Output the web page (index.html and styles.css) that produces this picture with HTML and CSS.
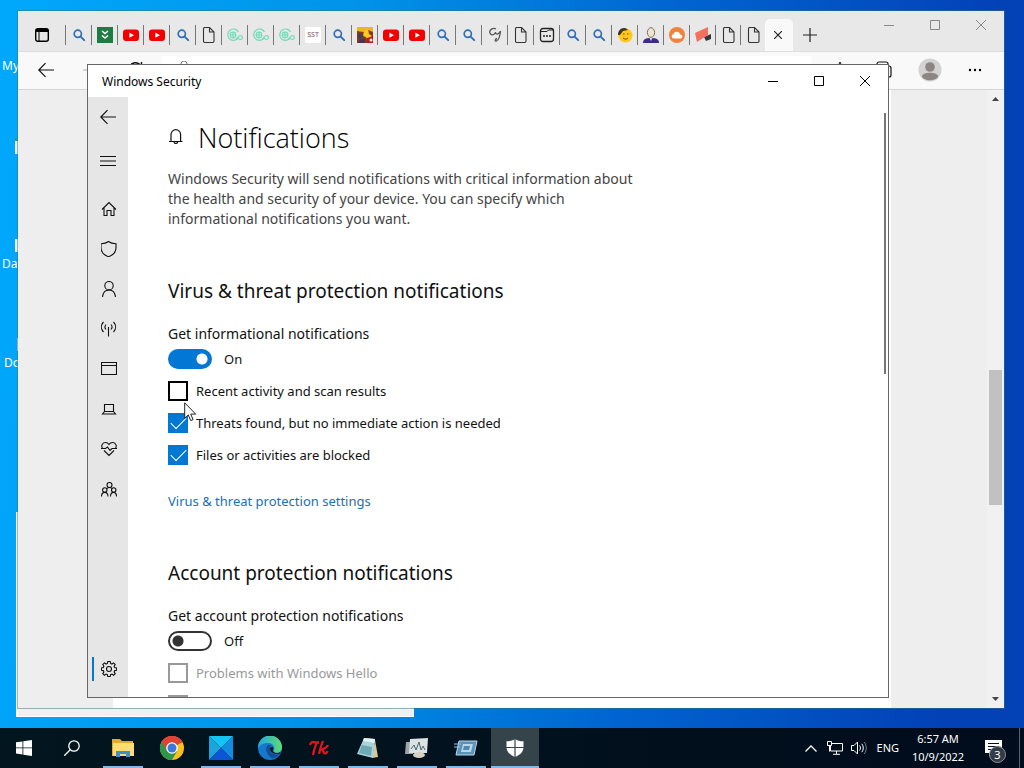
FILE: index.html
```html
<!DOCTYPE html>
<html lang="en">
<head>
    <meta charset="UTF-8">
    <meta name="viewport" content="width=device-width, initial-scale=1.0">
    <title>Windows Security</title>
    <link rel="stylesheet" href="styles.css">
</head>
<body>
    <!-- shared icons -->
    <svg class="sprite" aria-hidden="true">
        <symbol id="i-search" viewBox="0 0 16 16"><circle cx="6.8" cy="6.8" r="3.6" fill="none" stroke="#2f6fb8" stroke-width="1.7"/><path d="M9.6 9.6l3.6 3.6" stroke="#2f6fb8" stroke-width="1.9" stroke-linecap="round"/></symbol>
        <symbol id="i-youtube" viewBox="0 0 16 16"><rect x="0" y="2.500" width="16" height="11.500" rx="3" fill="#f40000"/><path d="M6.4 5.6v5.2L11 8.200z" fill="#fff"/></symbol>
        <symbol id="i-page" viewBox="0 0 16 16"><path d="M3.5.5h5l4.500 4.500v9.100a1.4 1.4 0 0 1-1.4 1.4H3.900A1.4 1.4 0 0 1 2.500 14V1.900A1.400 1.400 0 0 1 3.900.5M8.500.5V5H13" fill="none" stroke="#333" stroke-width="1.1"/></symbol>
        <symbol id="i-swirl" viewBox="0 0 16 16"><g fill="none" stroke="#74dcb9" stroke-width="1.200"><path d="M10.500 11.800A5.700 5.700 0 1 1 11.500 5"/><circle cx="6" cy="8" r="2.800"/><path d="M3 8h6M6 5v6"/><path d="M9 11.500c2 1.500 2-3 4.500-3 2.700 0 2.500 4 0 4-2 0-2.300-2-3.500-2.500"/></g></symbol>
        <symbol id="i-min" viewBox="0 0 10 10"><path d="M0 5.500h10" fill="none" stroke="currentColor"/></symbol>
        <symbol id="i-max" viewBox="0 0 10 10"><path d="M.5.5h9v9h-9z" fill="none" stroke="currentColor"/></symbol>
        <symbol id="i-close" viewBox="0 0 10 10"><path d="M0 0l10 10M10 0L0 10" fill="none" stroke="currentColor"/></symbol>
        <symbol id="i-back" viewBox="0 0 16 16"><path d="M16 8H.8M7.500 1.200L.8 8l6.700 6.800" fill="none" stroke="currentColor" stroke-width="1.200"/></symbol>
    </svg>

    <div class="workspace">
        <div class="desktop-icon icon-one"><span class="desktop-glyph"></span>My</div>
        <div class="desktop-icon icon-two"><span class="desktop-glyph green"></span></div>
        <div class="desktop-icon icon-three"><span class="desktop-glyph"></span>Dat</div>
        <div class="desktop-icon icon-four"><span class="desktop-glyph"></span>Doc</div>

        <div class="back-window"></div>

        <section class="browser">
            <header class="tab-strip">
                <button class="tab-actions" aria-label="Tab actions">
                    <svg width="14" height="14" viewBox="0 0 14 14"><rect x=".7" y=".7" width="12.600" height="12.600" rx="2" fill="none" stroke="#000" stroke-width="1.400"/><path d="M1 1h12v3H1z"/><path d="M4 3v10" stroke="#000"/></svg>
                </button>
                <div class="tabs">
                    <span class="tab"><svg><use href="#i-search"/></svg></span>
                    <span class="tab"><svg viewBox="0 0 16 16"><path d="M0 0h16v16H0z" fill="#1f7a43"/><path d="M5 4l3 2.500L11 4M5 8.500L8 11l3-2.500" fill="none" stroke="#fff" stroke-width="1.600"/></svg></span>
                    <span class="tab"><svg><use href="#i-youtube"/></svg></span>
                    <span class="tab"><svg><use href="#i-youtube"/></svg></span>
                    <span class="tab"><svg><use href="#i-search"/></svg></span>
                    <span class="tab"><svg><use href="#i-page"/></svg></span>
                    <span class="tab"><svg><use href="#i-swirl"/></svg></span>
                    <span class="tab"><svg><use href="#i-swirl"/></svg></span>
                    <span class="tab"><svg><use href="#i-swirl"/></svg></span>
                    <span class="tab"><span class="sst">SST</span></span>
                    <span class="tab"><svg><use href="#i-search"/></svg></span>
                    <span class="tab"><svg viewBox="0 0 16 16"><path d="M0 0h16v16H0z" fill="#8a3a16"/><path d="M0 0h16v5L11 3 6 5 0 4z" fill="#e8b820"/><path d="M7 4l4-2 1 5 3 2-4 5-2-4-3-1z" fill="#ffc81e"/><path d="M10 11l6-2v7h-6z" fill="#c81414"/><circle cx="3.500" cy="9" r="2.800" fill="#443f55"/><path d="M3 12h5v4H1z" fill="#46345a"/><circle cx="14" cy="13" r="1.500" fill="#fff"/></svg></span>
                    <span class="tab"><svg><use href="#i-youtube"/></svg></span>
                    <span class="tab"><svg><use href="#i-youtube"/></svg></span>
                    <span class="tab"><svg><use href="#i-search"/></svg></span>
                    <span class="tab"><svg><use href="#i-search"/></svg></span>
                    <span class="tab"><svg viewBox="0 0 16 16"><path d="M9 2C6 0 2 3 3 6c1 2.500 4 2.500 5.500-.5M8.500 5c0 3 3 3 4.500-.5M13.500 4C13 9 12 13 9.500 14c-2 .5-1.500-2 .5-2.500" fill="none" stroke="#555" stroke-width="1.300"/></svg></span>
                    <span class="tab"><svg><use href="#i-page"/></svg></span>
                    <span class="tab"><svg viewBox="0 0 16 16"><rect x="1.500" y="1.500" width="13" height="13" rx="2.500" fill="none" stroke="#222" stroke-width="1.300"/><path d="M2 4.500h6l1.500-1.500h5" fill="none" stroke="#222"/><path d="M4 9h2M7 9h2M10 9h2" stroke="#222" stroke-width="1.600"/></svg></span>
                    <span class="tab"><svg><use href="#i-search"/></svg></span>
                    <span class="tab"><svg><use href="#i-search"/></svg></span>
                    <span class="tab"><svg viewBox="0 0 16 16"><circle cx="8.500" cy="8.500" r="7" fill="#ffc61c"/><path d="M1 8C1 3 5 0 9 1.500l2 1.500L6 4 3 8z" fill="#3c3524"/><path d="M6 7h1.500M10 7h1.500M6 11c2 1.500 4 1.500 5 0" stroke="#7a4a00" fill="none"/></svg></span>
                    <span class="tab"><svg viewBox="0 0 16 16"><path d="M0 16c0-4 3-5 8-5s8 1 8 5z" fill="#3d2b86"/><path d="M6 10h4l-2 4z" fill="#ddd"/><ellipse cx="8" cy="5.500" rx="3.600" ry="4.800" fill="#eee6d2" stroke="#7a705a"/></svg></span>
                    <span class="tab"><svg viewBox="0 0 16 16"><circle cx="8" cy="8" r="8" fill="#f0823c"/><path d="M4.500 11.500a2.300 2.300 0 0 1 0-4.500 3.500 3.500 0 0 1 6.700.5 2 2 0 0 1 .3 4z" fill="#fff"/></svg></span>
                    <span class="tab"><svg viewBox="0 0 16 16"><path d="M9 10l7-3v5l-5 2z" fill="#33363c"/><path d="M0 6l13-6v8L2 15z" fill="#f4705c"/></svg></span>
                    <span class="tab narrow"><svg><use href="#i-page"/></svg></span>
                    <span class="tab narrow"><svg><use href="#i-page"/></svg></span>
                    <button class="tab-current" aria-label="Close tab"><svg width="8" height="8" viewBox="0 0 10 10"><path d="M0 0l10 10M10 0L0 10" stroke="#222" stroke-width="1.500"/></svg></button>
                    <button class="new-tab" aria-label="New tab"><svg width="14" height="14" viewBox="0 0 14 14"><path d="M7 0v14M0 7h14" stroke="#222" stroke-width="1.200"/></svg></button>
                </div>
                <div class="window-controls faded">
                    <button aria-label="Minimize"><svg><use href="#i-min"/></svg></button>
                    <button aria-label="Maximize"><svg><use href="#i-max"/></svg></button>
                    <button aria-label="Close"><svg><use href="#i-close"/></svg></button>
                </div>
            </header>
            <nav class="toolbar">
                <button aria-label="Back"><svg width="16" height="16"><use href="#i-back"/></svg></button>
                <button class="disabled" aria-label="Forward"><svg width="16" height="16" viewBox="0 0 16 16"><path d="M0 8h15" stroke="currentColor" stroke-width="1.200"/></svg></button>
                <button aria-label="Reload"><svg width="16" height="16" viewBox="0 0 16 16"><path d="M14 8A6.500 6.500 0 1 1 12 2.500M13.500 0v4h-4" fill="none" stroke="currentColor" stroke-width="1.400"/></svg></button>
                <div class="address"><svg width="12" height="16" viewBox="0 0 12 16"><path d="M3 7V3a3 3 0 0 1 6 0v4M1 7h10v7H1z" fill="none" stroke="#777"/></svg></div>
                <button aria-label="Favorites"><svg width="18" height="18" viewBox="0 0 18 18"><path d="M9 1l2.300 5.200 5.700.6-4.300 3.800 1.200 5.600L9 13.300l-4.900 2.900 1.200-5.600L1 6.800l5.700-.6z" fill="none" stroke="currentColor"/></svg></button>
                <button aria-label="Collections"><svg width="18" height="18" viewBox="0 0 18 18"><rect x="1" y="1" width="11" height="12" rx="2" fill="none" stroke="currentColor" stroke-width="1.200"/><rect x="4" y="5" width="11" height="11" rx="2" fill="#f8f8f8" stroke="currentColor" stroke-width="1.200"/><path d="M8 10.500h4M10 8.500v4" stroke="currentColor"/></svg></button>
                <button aria-label="Profile"><svg width="24" height="24" viewBox="0 0 24 24"><circle cx="12" cy="12" r="11.500" fill="#d2d2d2"/><circle cx="12" cy="9" r="4.800" fill="#8b8583"/><path d="M4 18.500c0-5 16-5 16 0-2 5-14 5-16 0z" fill="#8b8583"/></svg></button>
                <button aria-label="Settings and more"><svg width="14" height="4" viewBox="0 0 14 4"><circle cx="2" cy="2" r="1.200"/><circle cx="7" cy="2" r="1.200"/><circle cx="12" cy="2" r="1.200"/></svg></button>
            </nav>
            <div class="page">
                <div class="page-sheet"></div>
                <div class="page-scroll">
                    <svg width="7" height="4" viewBox="0 0 7 4"><path d="M3.500 0L7 4H0z" fill="#444"/></svg>
                    <div class="page-track"><span class="page-thumb"></span></div>
                    <svg width="7" height="4" viewBox="0 0 7 4"><path d="M0 0h7L3.500 4z" fill="#444"/></svg>
                </div>
            </div>
        </section>

        <section class="security">
            <header class="titlebar">
                <span class="titlebar-text">Windows Security</span>
                <div class="window-controls">
                    <button aria-label="Minimize"><svg><use href="#i-min"/></svg></button>
                    <button aria-label="Maximize"><svg><use href="#i-max"/></svg></button>
                    <button aria-label="Close"><svg><use href="#i-close"/></svg></button>
                </div>
            </header>
            <div class="security-body">
                <nav class="rail">
                    <button aria-label="Back"><svg viewBox="0 0 16 16"><use href="#i-back"/></svg></button>
                    <button class="rail-menu" aria-label="Menu"><svg viewBox="0 0 16 16"><path d="M0 3.500h16M0 8h16M0 12.500h16"/></svg></button>
                    <button aria-label="Home"><svg viewBox="0 0 16 16"><path d="M1 8.500l7-7 7 7M3 7v7.500h3v-5h4v5h3V7"/></svg></button>
                    <button aria-label="Virus &amp; threat protection"><svg viewBox="0 0 16 16"><path d="M7.500.5c2 1.600 4.500 2.200 7.500 2.300V7c0 4-3 7-7.500 8.700C3 14 0 11 0 7V2.800C3 2.700 5.500 2.100 7.500.5z"/></svg></button>
                    <button aria-label="Account protection"><svg viewBox="0 0 16 16"><circle cx="8" cy="4.700" r="4.200"/><path d="M1.500 16c.5-4.500 3-7 6.500-7s6 2.500 6.500 7"/></svg></button>
                    <button aria-label="Firewall &amp; network protection"><svg viewBox="0 0 16 16"><path d="M7.500 6v9.500M5 8.500c-1.300-1.500-1.300-3.500 0-5M10 8.500c1.300-1.500 1.300-3.500 0-5M2.500 11C-.3 8-.3 4 2.500 1M12.500 11c2.800-3 2.800-7 0-10"/></svg></button>
                    <button aria-label="App &amp; browser control"><svg viewBox="0 0 16 16"><path d="M.5 1.500h15v12H.5zM.5 4.500h15"/></svg></button>
                    <button aria-label="Device security"><svg viewBox="0 0 16 16"><path d="M3.500 3.500h9v7h-9zM3.500 10.500l-2 2.500h13l-2-2.500"/></svg></button>
                    <button aria-label="Device performance &amp; health"><svg viewBox="0 0 16 16"><path d="M1.500 7.500C-.5 4 2 1.500 4.500 1.500c1.500 0 2.700.8 3.500 2 .8-1.200 2-2 3.500-2C14 1.500 16.500 4 14.500 7.500M3 9.500l5 5 5-5M0 7.500h4.500l2-1.500 2.500 3.500 2-2H16"/></svg></button>
                    <button aria-label="Family options"><svg viewBox="0 0 16 16"><circle cx="8.500" cy="4" r="2.500"/><circle cx="3.800" cy="9" r="2.200"/><circle cx="12.700" cy="9" r="2.200"/><path d="M.5 15.500c0-5.500 6.500-5.500 6.500 0M9.500 15.500c0-5.500 6-5.500 6 0M5.500 8c1-2 5-2 6 0"/></svg></button>
                    <button class="rail-settings" aria-label="Settings"><svg viewBox="0 0 16 16"><circle cx="8" cy="8" r="2.500"/><path d="M6.800.5h2.400l.4 1.900 1.300.6 1.700-1.100 1.600 1.600-1.100 1.700.6 1.300 1.900.4v2.300l-1.900.4-.6 1.300 1.100 1.700-1.600 1.600-1.700-1.100-1.300.6-.4 1.900H6.800l-.4-1.900-1.300-.6-1.700 1.100-1.600-1.600 1.100-1.700-.6-1.300-1.900-.4V6.900l1.900-.4.6-1.300-1.100-1.700 1.600-1.600 1.700 1.100 1.300-.6z"/></svg></button>
                </nav>
                <main class="content">
                    <h1 class="page-title">
                        <svg width="16" height="20" viewBox="0 0 16 20"><path d="M1 13.500H14.500M3 13.500V6.500a4.800 4.800 0 0 1 9.600 0v7M6 14c.5 2 3.200 2 3.700 0" fill="none" stroke="#111" stroke-width="1.200"/></svg>
                        Notifications
                    </h1>
                    <p class="intro">Windows Security will send notifications with critical information about the health and security of your device. You can specify which informational notifications you want.</p>

                    <section class="group">
                        <h2>Virus &amp; threat protection notifications</h2>
                        <label class="group-label" for="virus">Get informational notifications</label>
                        <div class="toggle-row"><input class="toggle" id="virus" type="checkbox" role="switch" checked><span>On</span></div>
                        <label class="check"><input class="hovered" type="checkbox">Recent activity and scan results</label>
                        <label class="check"><input type="checkbox" checked>Threats found, but no immediate action is needed</label>
                        <label class="check"><input type="checkbox" checked>Files or activities are blocked</label>
                        <a class="settings-link" href="#">Virus &amp; threat protection settings</a>
                    </section>

                    <section class="group">
                        <h2>Account protection notifications</h2>
                        <label class="group-label" for="account">Get account protection notifications</label>
                        <div class="toggle-row"><input class="toggle" id="account" type="checkbox" role="switch"><span>Off</span></div>
                        <label class="check"><input type="checkbox" disabled>Problems with Windows Hello</label>
                        <label class="check"><input type="checkbox" disabled aria-label="Account notification"></label>
                    </section>
                </main>
                <span class="content-thumb"></span>
            </div>
        </section>

        <svg class="cursor" width="13" height="20" viewBox="0 0 13 20"><path d="M.7.8v15.600l3.600-3.500 2.400 5.700 2.400-1-2.400-5.500h5z" fill="#fff" stroke="#222" stroke-width="1"/></svg>
    </div>

    <footer class="taskbar">
        <button class="task" aria-label="Start"><svg width="16" height="16" viewBox="0 0 16 16"><path d="M0 2.300L6.500 1.400v6.100H0zM7.300 1.300L16 0v7.500H7.300zM0 8.300h6.500v6.200L0 13.600zM7.300 8.300H16V16l-8.700-1.300z" fill="#fff"/></svg></button>
        <button class="task" aria-label="Search"><svg width="16" height="16" viewBox="0 0 16 16"><circle cx="10" cy="6" r="5.200" fill="none" stroke="#fff" stroke-width="1.300"/><path d="M6.200 9.800L.3 15.700" stroke="#fff" stroke-width="1.300"/></svg></button>
        <div class="apps">
            <button class="task open" aria-label="File Explorer"><svg width="22" height="18" viewBox="0 0 22 18"><path d="M0 0h8l2 2h11v15H0z" fill="#e5a82c"/><path d="M1 4h21v13H1z" fill="#ffdc75"/><path d="M4 18v-6h14v6h-4v-3H8v3z" fill="#3f91c4"/></svg></button>
            <button class="task" aria-label="Chrome"><svg width="24" height="24" viewBox="0 0 24 24"><circle cx="12" cy="12" r="12" fill="#fbc11b"/><path d="M12 12L1.600 6A12 12 0 0 1 22.400 6z" fill="#df4335"/><path d="M1.600 6A12 12 0 0 0 12 24l5.200-9L12 12z" fill="#30964b"/><path d="M12 6.500h10.600A12 12 0 0 0 1.600 6l5.200 9z" fill="#df4335"/><path d="M1.600 6l5.200 9 5.200 3-1.500 5.900A12 12 0 0 1 1.600 6z" fill="#30964b"/><circle cx="12" cy="12" r="5.800" fill="#fff"/><circle cx="12" cy="12" r="4.500" fill="#3b78e0"/></svg></button>
            <button class="task open" aria-label="Blue X"><svg width="24" height="24" viewBox="0 0 24 24"><path d="M0 0h24L12 12z" fill="#13c4f4"/><path d="M0 0l12 12L0 24z" fill="#1ba5dc"/><path d="M24 0v24L12 12z" fill="#0f8de0"/><path d="M0 24l12-12 12 12z" fill="#0b55d6"/></svg></button>
            <button class="task open" aria-label="Edge"><svg width="24" height="24" viewBox="0 0 24 24"><defs><linearGradient id="edge-top" x1="0" x2="1"><stop offset="0" stop-color="#20a9e0"/><stop offset="1" stop-color="#5edb70"/></linearGradient></defs><circle cx="12" cy="12" r="12" fill="#1478cc"/><path d="M0 12a12 12 0 0 1 24-1c0 5-4 6.500-7 5.500-2-.7-1.500-1.700-.8-3C17 9 13 6.500 8.500 7 4 7.500 1 10 0 12z" fill="url(#edge-top)"/><path d="M10 8.500c-4 4-1 12 5 14 3-1 6-3 7-5-4 2-10 1-10-5 0-2 1-3 2-3z" fill="#134e97"/><path d="M15.500 12.500c-1.500 2-.5 3.500 1.500 4.200 2.500.8 5 0 6.200-1.500L22 17.500c-4 1.500-10-.5-10-5 .5-2 3.500-2 3.500 0z" fill="#031620"/></svg></button>
            <button class="task open" aria-label="Tk"><svg width="20" height="16" viewBox="0 0 20 16"><path d="M1 5C2 1 5 2 10 2.500M8 2.500C6 6 5 10 4 15M14 1c-2 4-3 9-4 13M19 5c-1 3-5 4-7 5M13.500 9.500c1 2 1 4 2.500 4 1 0 2-1 2.500-2.500" fill="none" stroke="#e0141c" stroke-width="2.300"/></svg></button>
            <button class="task open" aria-label="Notepad"><svg width="22" height="22" viewBox="0 0 22 22"><path d="M18 3l3 17-6 1z" fill="#d9c893"/><path d="M7 1l11 1-2 19-16-4z" fill="#a8d3db"/><path d="M7 1l11 1-.5 4L6 4z" fill="#e5f2ef"/><path d="M5 8l10 2-1 9-12-3z" fill="#6eaab5"/></svg></button>
            <button class="task open" aria-label="Performance Monitor"><svg width="24" height="22" viewBox="0 0 24 22"><path d="M1 5h7v12H0z" fill="#9aa6aa"/><path d="M5 2l18-1-1 15H4z" fill="#dce2e3"/><path d="M6 12l3-4 2 5 3-8 2 8 2-4 2 4" fill="none" stroke="#476878"/><ellipse cx="14" cy="18" rx="6" ry="3" fill="#d8d0c5"/></svg></button>
            <button class="task open" aria-label="Run"><svg width="24" height="18" viewBox="0 0 24 18"><path d="M5 2h18l-3 14H2z" fill="#5c91b8" stroke="#b7d6eb"/><path d="M9 5h10l-2 8H7z" fill="#b7d6eb"/><path d="M10 7h6l-1 4H9z" fill="#5487af"/><path d="M0 5h7M0 8h6" stroke="#9dc3de"/></svg></button>
            <button class="task open current" aria-label="Windows Security"><svg width="18" height="20" viewBox="0 0 18 20"><path d="M9 1c2.300 1.600 5 2.300 8.500 2.300V9c0 5-3.500 8-8.500 10C4 17 .5 14 .5 9V3.300C4 3.300 6.700 2.600 9 1z" fill="#fff"/><path d="M9 1v18M0 9.500h18" stroke="#35434b" stroke-width="1.200"/></svg></button>
        </div>
        <div class="tray">
            <button aria-label="Show hidden icons"><svg width="12" height="7" viewBox="0 0 12 7"><path d="M.5 6.500L6 1l5.500 5.500" fill="none" stroke="#fff" stroke-width="1.300"/></svg></button>
            <button aria-label="Network"><svg width="16" height="14" viewBox="0 0 16 14"><path d="M5 2.500h10.500v7.500H3.500V5M9.500 10v3M6 13.300h7M.5.500h4v4h-4zM2.500 4.500v6" fill="none" stroke="#fff"/></svg></button>
            <button aria-label="Volume"><svg width="16" height="14" viewBox="0 0 16 14"><path d="M.5 4.500h2.500L6.500 1v12L3 9.500H.5zM8.500 4.500c1.300 1.500 1.300 3.500 0 5M10.800 2.800c2 2.500 2 6 0 8.400" fill="none" stroke="#fff"/><path d="M13 1c3 3.500 3 8.500 0 12" fill="none" stroke="#7c8790"/></svg></button>
            <span class="language">ENG</span>
            <time class="clock" datetime="2022-10-09T06:57">6:57 AM<br>10/9/2022</time>
            <button class="action-center" aria-label="Notifications"><svg width="17" height="17" viewBox="0 0 17 17"><path d="M0 0h17v13H8l-4 3.500V13H0z" fill="#fff"/><path d="M3 3.500h11M3 6.500h11M3 9.500h8" stroke="#02101d"/></svg><span class="badge">3</span></button>
            <span class="show-desktop"></span>
        </div>
    </footer>
</body>
</html>
```
FILE: styles.css
```css
:root {
    --blue: #0078d4;
    --link: #1a6fb5;
    --rail: #e6e6e6;
}

* {
    margin: 0;
    padding: 0;
    box-sizing: border-box;
}

body {
    font-family: "Noto Sans", "Open Sans", sans-serif;
    font-size: 14px;
    line-height: 20px;
    color: #111;
    height: 100vh;
    display: flex;
    flex-direction: column;
    overflow: hidden;
}

button {
    border: 0;
    background: none;
    color: inherit;
    font: inherit;
    display: flex;
    align-items: center;
    justify-content: center;
}

.sprite {
    position: absolute;
    width: 0;
    height: 0;
}

/* desktop */
.workspace {
    flex: 1;
    position: relative;
    overflow: hidden;
    background: linear-gradient(95deg, #00a8fb 0%, #0094ea 32%, #0065d0 62%, #0341b7 92%);
}

.desktop-icon {
    position: absolute;
    left: 2px;
    padding-top: 17px;
    font-size: 12px;
    line-height: 16px;
    color: #fff;
}

.icon-one { top: 41px; }
.icon-two { top: 138px; }
.icon-three { top: 239px; }
.icon-four { top: 338px; }

.icon-four {
    left: 4px;
}

.desktop-glyph {
    position: absolute;
    left: 13px;
    top: 0;
    width: 20px;
    height: 13px;
    background: #e8f4fc;
}

.icon-one .desktop-glyph {
    display: none;
}

.desktop-glyph.green {
    height: 16px;
    border-top: 3px solid #1ba38a;
}

.back-window {
    position: absolute;
    left: 16px;
    top: 512px;
    width: 398px;
    bottom: 11px;
    background: #f0f0f0;
    border-left: 2px solid #fff;
    border-bottom: 1px solid #fff;
}

/* browser */
.browser {
    position: absolute;
    top: 11px;
    right: 20px;
    bottom: 20px;
    left: 18px;
    display: flex;
    flex-direction: column;
    background: #eee;
    box-shadow: 0 0 0 1px rgba(60, 110, 130, 0.5);
}

.tab-strip {
    height: 40px;
    display: flex;
    align-items: flex-end;
    background: #e8e8e8;
}

.tab-actions {
    width: 47px;
    height: 32px;
}

.tabs {
    flex: 1;
    display: flex;
    align-items: flex-end;
}

.tab {
    width: 26px;
    height: 32px;
    padding-left: 2px;
    display: flex;
    align-items: center;
    justify-content: center;
    background: linear-gradient(#777, #777) 0 50% / 1px 20px no-repeat;
}

.tab.narrow {
    width: 25px;
}

.tab svg {
    width: 16px;
    height: 16px;
}

.sst {
    width: 16px;
    background: #fff;
    border-radius: 2px;
    font-size: 7px;
    line-height: 16px;
    text-align: center;
    color: #7a4a5c;
}

.tab-current {
    width: 28px;
    height: 32px;
    padding-right: 2px;
    background: #f9f9f9;
    border-radius: 5px 5px 0 0;
}

.new-tab {
    width: 34px;
    height: 32px;
}

.window-controls {
    display: flex;
    align-self: flex-start;
}

.window-controls button {
    width: 46px;
    height: 32px;
}

.window-controls svg {
    width: 10px;
    height: 10px;
}

.faded button {
    height: 28px;
    color: #888;
}

.toolbar {
    height: 39px;
    padding: 0 6px;
    display: flex;
    align-items: center;
    background: #f9f9f9;
    border-top: 1px solid #ddd;
    border-bottom: 1px solid #d5d5d5;
}

.toolbar button {
    width: 45px;
    height: 32px;
    padding: 0 2px 2px 0;
}

.toolbar .disabled {
    color: #bbb;
}

.address {
    flex: 1;
    height: 30px;
    margin: 0 6px 0 3px;
    padding: 5px 16px;
    background: #fff;
    border-radius: 3px;
}

.page {
    flex: 1;
    display: flex;
}

.page-sheet {
    flex: 1;
    margin: 0 96px 0 95px;
    background: #fff;
}

.page-scroll {
    width: 17px;
    padding: 7px 0;
    display: flex;
    flex-direction: column;
    align-items: center;
    background: #f1f1f1;
}

.page-track {
    flex: 1;
    display: flex;
    flex-direction: column;
}

/* space above and below the thumb */
.page-track::before {
    content: "";
    flex: 7;
}

.page-track::after {
    content: "";
    flex: 5;
}

.page-thumb {
    width: 13px;
    height: 135px;
    background: #c1c1c1;
}

/* security window */
.security {
    position: absolute;
    top: 64px;
    left: 87px;
    right: 135px;
    bottom: 30px;
    display: flex;
    flex-direction: column;
    background: #fff;
    border: 1px solid #666;
}

.titlebar {
    height: 32px;
    display: flex;
    align-items: center;
    justify-content: space-between;
    padding-left: 14px;
    font-size: 12px;
    color: #000;
}

.titlebar-text {
    padding-top: 2px;
}

.security-body {
    flex: 1;
    min-height: 0;
    display: flex;
}

.rail {
    width: 40px;
    padding-bottom: 8px;
    display: flex;
    flex-direction: column;
    background: var(--rail);
}

.rail button {
    width: 40px;
    height: 40px;
}

.rail svg {
    width: 16px;
    height: 16px;
    fill: none;
    stroke: #111;
    stroke-width: 1.1;
}

.rail .rail-menu {
    height: 48px;
    margin-bottom: 4px;
}

.rail-menu ~ button {
    padding-left: 2px;
}

.rail .rail-settings {
    margin-top: auto;
    background: linear-gradient(var(--blue), var(--blue)) 4px 50% / 2px 24px no-repeat;
}

.content {
    flex: 1;
    overflow: hidden;
    padding: 21px 40px 0;
}

.content-thumb {
    width: 2px;
    height: 261px;
    margin: 16px 2px 0 0;
    background: #777;
}

.page-title {
    display: flex;
    align-items: center;
    gap: 14px;
    font-family: "Open Sans", "Noto Sans", sans-serif;
    font-size: 27px;
    font-weight: 300;
    line-height: 40px;
    color: #000;
}

.intro {
    max-width: 480px;
    margin-top: 11px;
    color: #444;
}

.group {
    display: flex;
    flex-direction: column;
    align-items: flex-start;
    margin-top: 48px;
}

.group h2 {
    font-size: 19px;
    font-weight: 400;
    line-height: 28px;
}

.group-label {
    margin-top: 19px;
}

.toggle-row {
    display: flex;
    align-items: center;
    gap: 12px;
    margin-top: 5px;
    font-size: 13px;
}

input {
    appearance: none;
}

.toggle {
    width: 44px;
    height: 20px;
    border: 2px solid #333;
    border-radius: 10px;
    background: radial-gradient(circle at 8px 8px, #333 5px, transparent 6px);
}

.toggle:checked {
    border-color: var(--blue);
    background: var(--blue) radial-gradient(circle at 32px 8px, #fff 5px, var(--blue) 6px);
}

.check {
    display: flex;
    align-items: center;
    gap: 8px;
    margin-top: 12px;
    font-size: 13px;
}

.check input {
    width: 20px;
    height: 20px;
    border: 2px solid #444;
    display: grid;
    place-items: center;
}

.check .hovered {
    border-color: #000;
}

.check input:checked {
    border-color: var(--blue);
    background: var(--blue);
}

.check input:checked::before {
    content: "";
    width: 14px;
    height: 7px;
    border: solid #fff;
    border-width: 0 0 1px 1px;
    transform: translateY(-2px) rotate(-45deg);
}

.check:has(:disabled) {
    color: #999;
}

.check input:disabled {
    border-color: #999;
}

.settings-link {
    margin-top: 26px;
    font-size: 13px;
    color: var(--link);
    text-decoration: none;
}

.cursor {
    position: absolute;
    left: 184px;
    top: 402px;
}

/* taskbar */
.taskbar {
    height: 40px;
    display: flex;
    background: linear-gradient(90deg, #02161f, #010c1c);
    color: #fff;
}

.task {
    width: 48px;
    height: 40px;
}

.apps {
    flex: 1;
    display: flex;
    gap: 1px;
    padding-left: 3px;
}

.open {
    background: linear-gradient(#80b8e8, #80b8e8) 50% 100% / 40px 2px no-repeat;
}

.current {
    background-color: #35434b;
    background-size: 48px 2px;
}

.tray {
    display: flex;
    align-items: center;
    font-size: 11px;
    line-height: 18px;
}

.tray button {
    width: 24px;
    height: 40px;
}

.language {
    padding: 0 6px;
}

.clock {
    width: 66px;
    text-align: center;
    white-space: nowrap;
}

.tray .action-center {
    position: relative;
    width: 44px;
    margin-right: 4px;
}

.badge {
    position: absolute;
    left: 18px;
    top: 18px;
    width: 17px;
    height: 17px;
    border: 1px solid #8a929a;
    border-radius: 50%;
    background: #333c46;
    font-size: 11px;
    line-height: 15px;
}

.show-desktop {
    width: 5px;
    height: 40px;
    border-left: 1px solid #56616b;
}
```
